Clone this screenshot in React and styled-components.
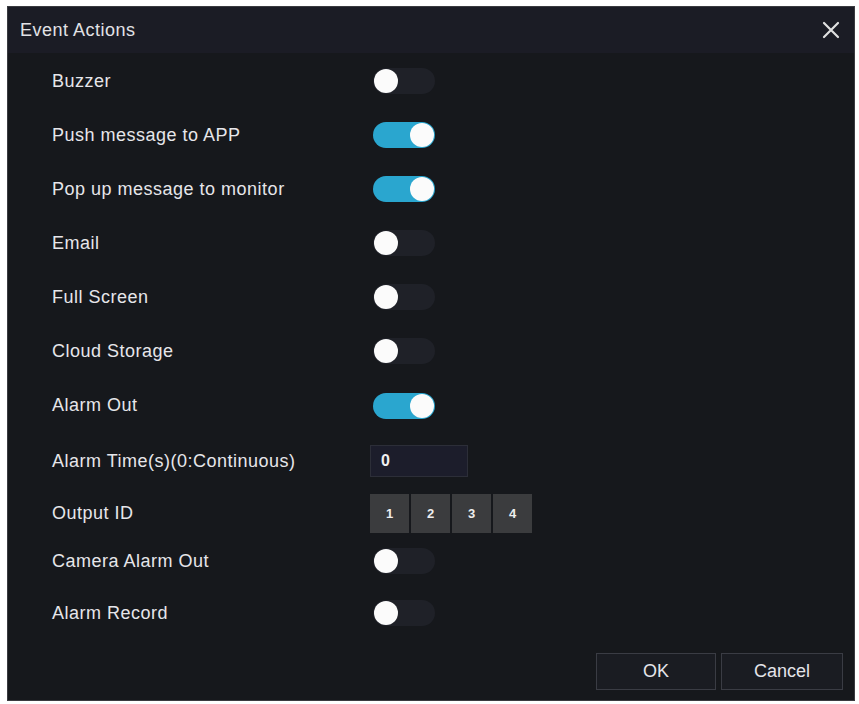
import { useState } from "react";
import styled, { createGlobalStyle } from "styled-components";

const GlobalStyle = createGlobalStyle`
  html, body {
    margin: 0;
    padding: 0;
    background: #ffffff;
  }
  body {
    font-family: "Liberation Sans", Arial, sans-serif;
  }
`;

const Page = styled.div`
  padding: 6px 0 0 7px;
`;

const Dialog = styled.div`
  width: 848px;
  height: 695px;
  box-sizing: border-box;
  background: #16181c;
  border: 1px solid #3a3b40;
  display: flex;
  flex-direction: column;
`;

const Header = styled.div`
  height: 46px;
  flex: none;
  display: flex;
  align-items: center;
  justify-content: space-between;
  padding: 0 14px 0 12px;
  background: #1b1c25;
`;

const Title = styled.div`
  color: #e2e2e6;
  font-size: 18px;
  letter-spacing: 0.5px;
`;

const CloseButton = styled.button`
  border: none;
  background: none;
  padding: 0;
  display: flex;
  cursor: pointer;
`;

const Body = styled.div`
  flex: 1;
  padding: 1px 0 0 44px;
  display: flex;
  flex-direction: column;
`;

const Row = styled.div`
  height: ${(p) => p.h || 54}px;
  display: grid;
  grid-template-columns: 318px auto;
  align-items: center;
`;

const Label = styled.div`
  color: #e6e6ea;
  font-size: 18px;
  letter-spacing: 0.5px;
`;

const Track = styled.button`
  width: 62px;
  height: 26px;
  margin-left: 3px;
  border: none;
  padding: 1px;
  border-radius: 13px;
  background: ${(p) => (p.on ? "#2aa6cf" : "#1f2128")};
  display: flex;
  justify-content: ${(p) => (p.on ? "flex-end" : "flex-start")};
  align-items: center;
  cursor: pointer;
  box-sizing: border-box;
`;

const Knob = styled.span`
  width: 24px;
  height: 24px;
  border-radius: 50%;
  background: #fbfbfb;
`;

const TimeInput = styled.input`
  width: 98px;
  height: 32px;
  box-sizing: border-box;
  background: #1c1d2b;
  border: 1px solid #2c2e38;
  color: #f0f0f0;
  font-family: "Liberation Sans", Arial, sans-serif;
  font-size: 16px;
  font-weight: bold;
  padding: 0 10px;
  outline: none;
`;

const IdGroup = styled.div`
  display: flex;
  gap: 2px;
`;

const IdButton = styled.button`
  width: 39px;
  height: 39px;
  border: none;
  background: ${(p) => (p.active ? "#2aa6cf" : "#3b3c3e")};
  color: #eeeeee;
  font-family: "Liberation Sans", Arial, sans-serif;
  font-size: 13px;
  font-weight: bold;
  cursor: pointer;
`;

const Footer = styled.div`
  display: flex;
  justify-content: flex-end;
  gap: 5px;
  padding: 0 11px 10px 0;
`;

const FooterButton = styled.button`
  width: ${(p) => p.w}px;
  height: 37px;
  background: #1a1c22;
  border: 1px solid #3a3c44;
  color: #e4e4ea;
  font-family: "Liberation Sans", Arial, sans-serif;
  font-size: 18px;
  cursor: pointer;
`;

const Toggle = ({ on, onClick }) => (
  <Track on={on} onClick={onClick}>
    <Knob />
  </Track>
);

const initial = {
  buzzer: false,
  push: true,
  popup: true,
  email: false,
  fullScreen: false,
  cloud: false,
  alarmOut: true,
  cameraOut: false,
  record: false,
};

export default function App() {
  const [state, setState] = useState(initial);
  const [time, setTime] = useState("0");
  const [outputs, setOutputs] = useState([]);

  const flip = (key) => setState((s) => ({ ...s, [key]: !s[key] }));
  const toggleOutput = (n) =>
    setOutputs((o) => (o.includes(n) ? o.filter((x) => x !== n) : [...o, n]));

  const switchRow = (key, label, h) => (
    <Row h={h} key={key}>
      <Label>{label}</Label>
      <div>
        <Toggle on={state[key]} onClick={() => flip(key)} />
      </div>
    </Row>
  );

  return (
    <Page>
      <GlobalStyle />
      <Dialog>
        <Header>
          <Title>Event Actions</Title>
          <CloseButton aria-label="Close">
            <svg width="18" height="18" viewBox="0 0 18 18">
              <path
                d="M2 2 L16 16 M16 2 L2 16"
                stroke="#e0e0e0"
                strokeWidth="2.2"
                strokeLinecap="round"
              />
            </svg>
          </CloseButton>
        </Header>
        <Body>
          {switchRow("buzzer", "Buzzer")}
          {switchRow("push", "Push message to APP")}
          {switchRow("popup", "Pop up message to monitor")}
          {switchRow("email", "Email")}
          {switchRow("fullScreen", "Full Screen")}
          {switchRow("cloud", "Cloud Storage")}
          {switchRow("alarmOut", "Alarm Out", 55)}
          <Row h={56}>
            <Label>Alarm Time(s)(0:Continuous)</Label>
            <div>
              <TimeInput value={time} onChange={(e) => setTime(e.target.value)} />
            </div>
          </Row>
          <Row h={48}>
            <Label>Output ID</Label>
            <IdGroup>
              {[1, 2, 3, 4].map((n) => (
                <IdButton
                  key={n}
                  active={outputs.includes(n)}
                  onClick={() => toggleOutput(n)}
                >
                  {n}
                </IdButton>
              ))}
            </IdGroup>
          </Row>
          {switchRow("cameraOut", "Camera Alarm Out", 48)}
          {switchRow("record", "Alarm Record", 56)}
        </Body>
        <Footer>
          <FooterButton w={120}>OK</FooterButton>
          <FooterButton w={122}>Cancel</FooterButton>
        </Footer>
      </Dialog>
    </Page>
  );
}
